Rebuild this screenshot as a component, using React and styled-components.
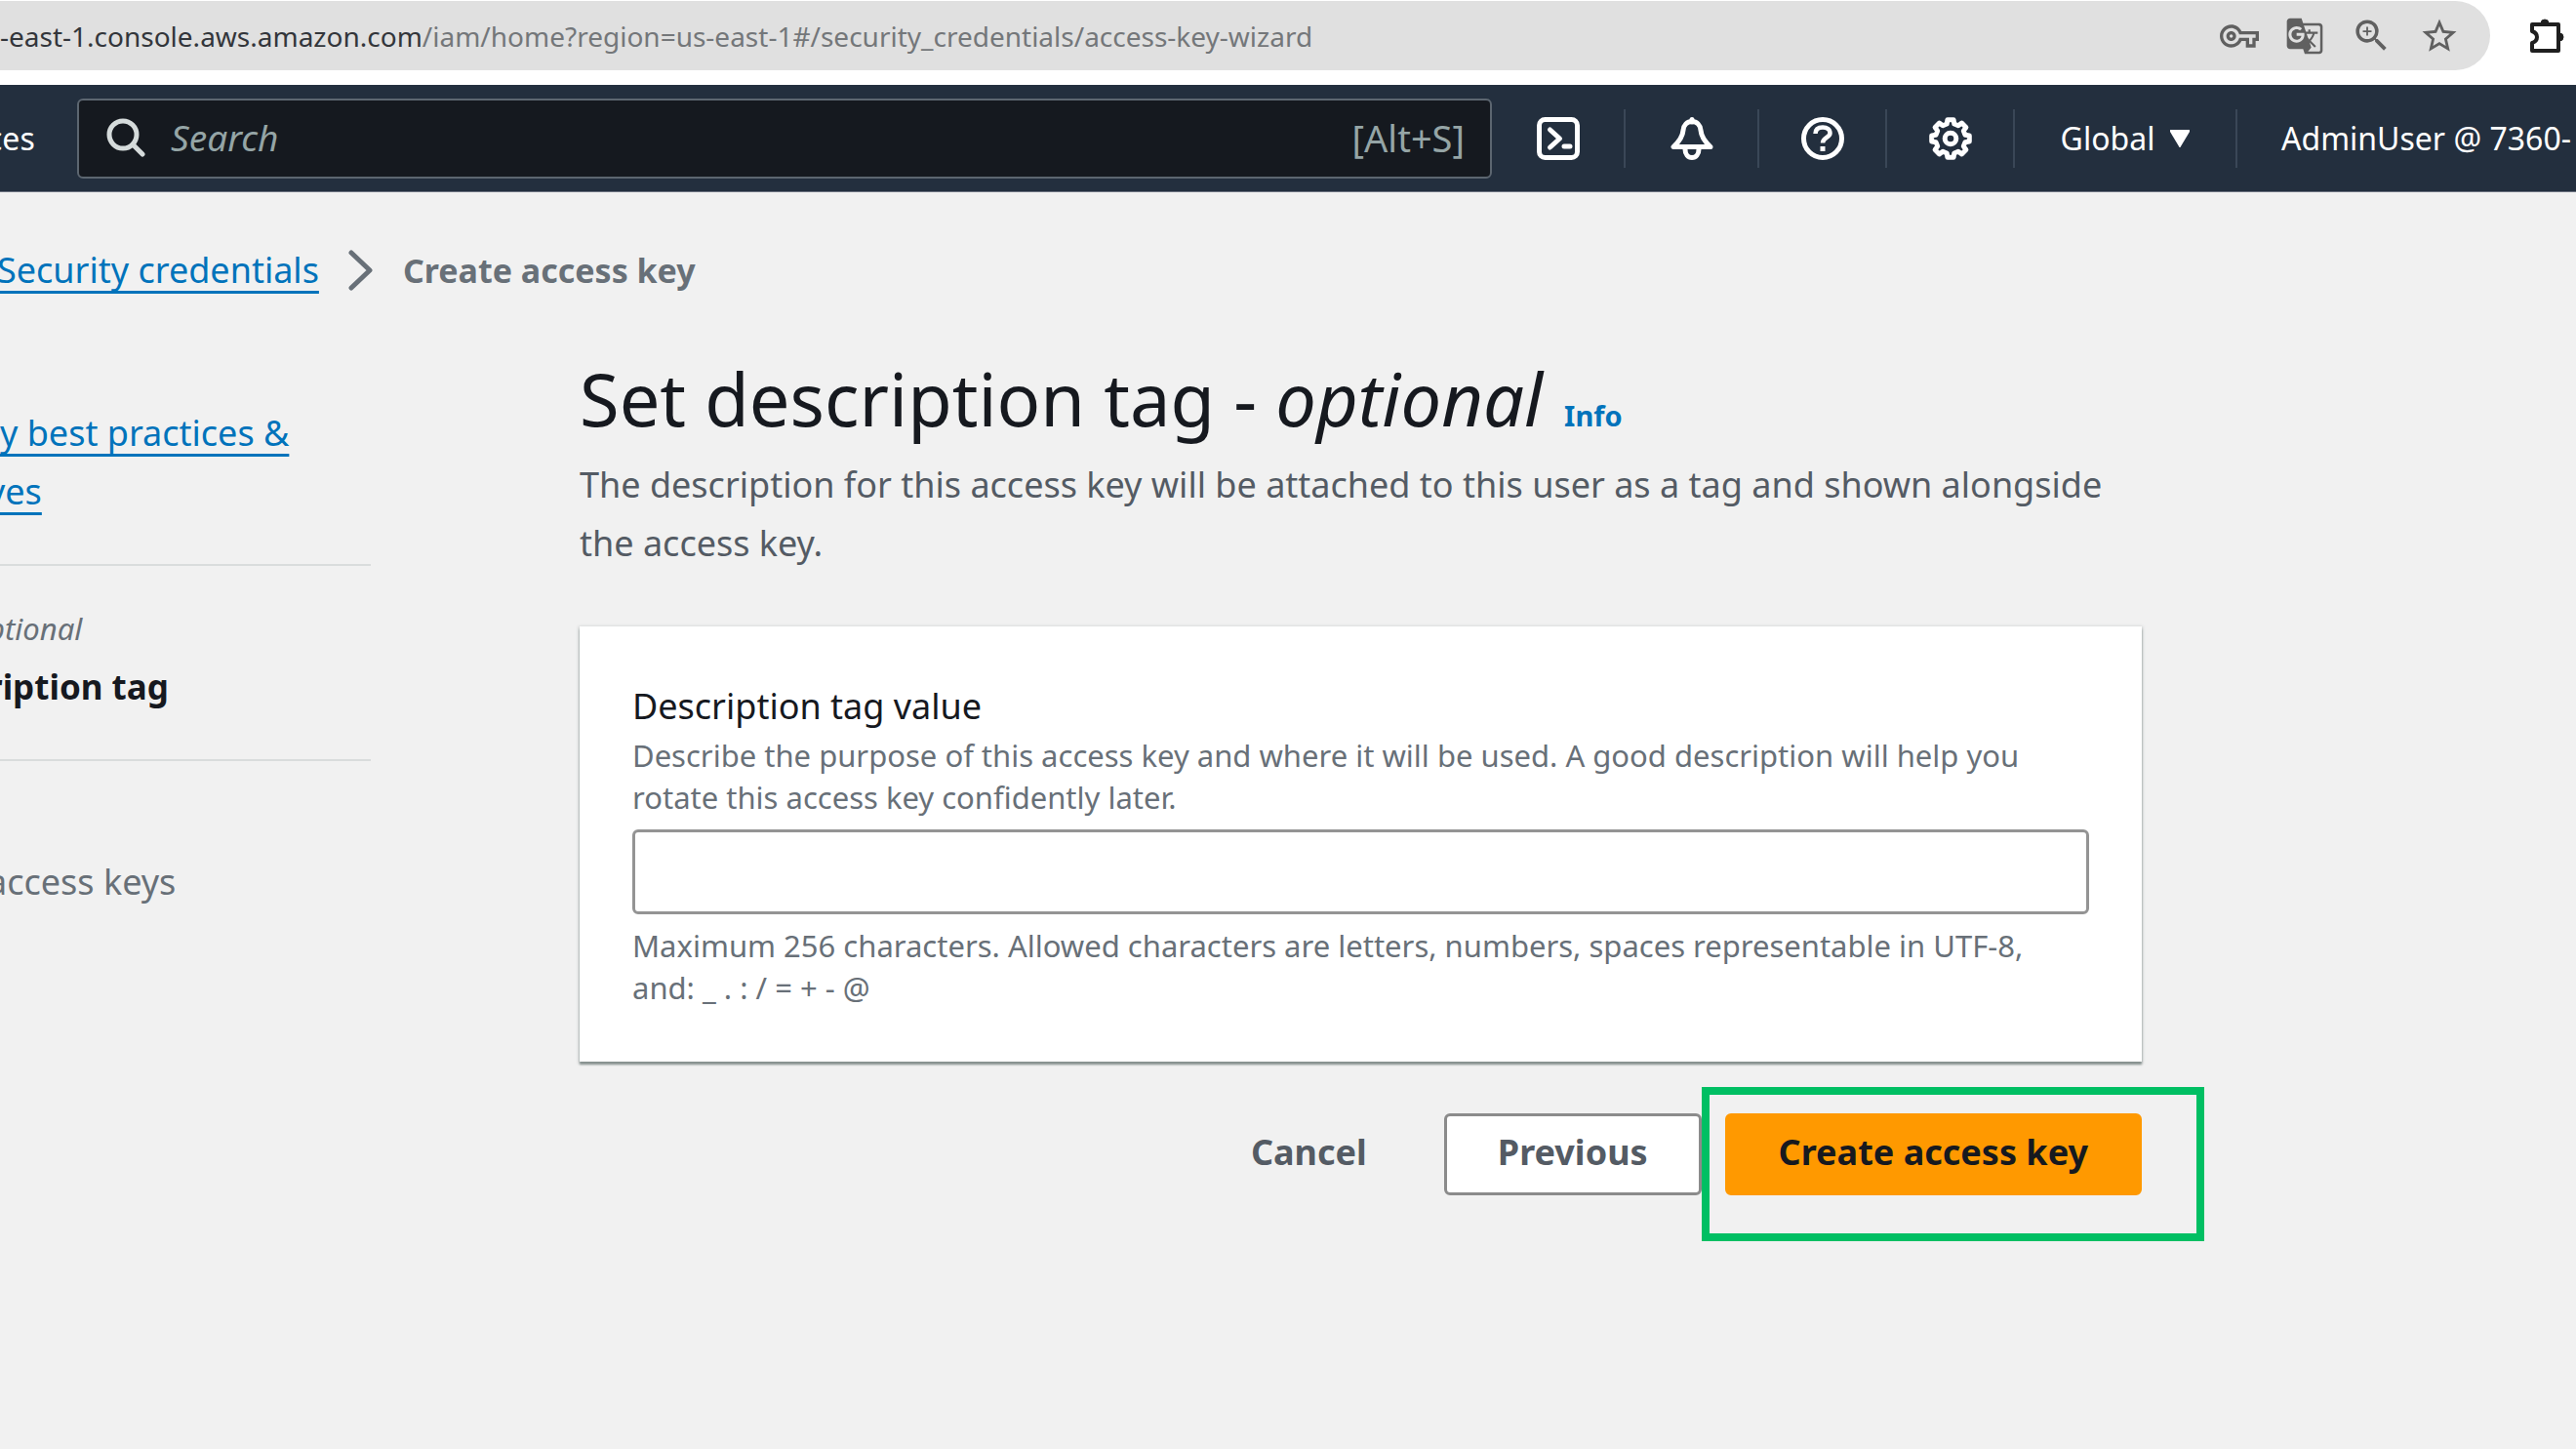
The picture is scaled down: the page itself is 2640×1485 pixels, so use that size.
import React from "react";
import styled, { createGlobalStyle } from "styled-components";
import {
  MdOutlineVpnKey,
  MdGTranslate,
  MdOutlineZoomIn,
  MdStarOutline,
} from "react-icons/md";

const GlobalStyle = createGlobalStyle`
  *, *::before, *::after { box-sizing: border-box; }
  body {
    margin: 0;
    background: #f1f1f1;
    color: #16191f;
    font-family: "Noto Sans", "Open Sans", sans-serif;
    font-size: 36px;
    line-height: 60px;
    overflow-x: hidden;
  }
  button, input { font: inherit; color: inherit; }
  button { cursor: pointer; }
`;

/* Browser bar */

const BrowserBar = styled.div`
  display: flex;
  align-items: flex-start;
  height: 87px;
  padding-top: 1px;
  background: #fff;
`;

const AddressBar = styled.div`
  flex: 1;
  display: flex;
  align-items: center;
  justify-content: space-between;
  height: 71px;
  padding-right: 31px;
  border-radius: 0 36px 36px 0;
  background: #e0e0e0;
`;

const Url = styled.span`
  font-size: 28px;
  line-height: 40px;
  white-space: nowrap;
  color: #74777a;
`;

const UrlHost = styled.span`
  color: #33363b;
`;

const AddressActions = styled.div`
  display: flex;
  align-items: center;
  gap: 27px;
`;

const PlainButton = styled.button`
  display: flex;
  align-items: center;
  justify-content: center;
  padding: 0;
  border: 0;
  background: none;
  color: ${(p) => p.$color || "#606060"};
`;

const Extensions = styled.div`
  display: flex;
  align-items: center;
  width: 88px;
  height: 71px;
  padding-left: 38px;
`;

/* Console navigation */

const NavBar = styled.nav`
  display: flex;
  align-items: center;
  height: 110px;
  background: #232f3e;
  border-bottom: 1px solid #6b7280;
  color: #fff;
`;

const NavText = styled.button`
  flex: none;
  padding: 0;
  border: 0;
  background: none;
  font-size: 32px;
  line-height: 60px;
  text-align: left;
  white-space: nowrap;
`;

const NavLead = styled.div`
  flex: none;
  width: 92px;
  margin-left: -13px;
`;

const NavAccount = styled.div`
  flex: none;
  width: 347px;
  padding-left: 45px;
`;

const SearchBox = styled.label`
  flex: 1;
  display: flex;
  align-items: center;
  gap: 26px;
  height: 82px;
  padding: 0 26px 2px 28px;
  border: 2px solid #5c6670;
  border-radius: 6px;
  background: #15191f;
  color: #95a5a6;
`;

const SearchInput = styled.input`
  flex: 1;
  min-width: 0;
  padding: 0;
  border: 0;
  outline: 0;
  background: none;
  font-size: 37px;
  &::placeholder {
    color: #95a5a6;
    opacity: 1;
    font-style: italic;
  }
`;

const Shortcut = styled.span`
  font-size: 38px;
`;

const NavCell = styled.div`
  flex: none;
  display: flex;
  align-items: center;
  justify-content: center;
  width: ${(p) => p.$width}px;
  height: 60px;
  border-right: 2px solid #3a4757;
`;

const RegionButton = styled.button`
  display: flex;
  align-items: center;
  gap: 16px;
  padding: 0;
  border: 0;
  background: none;
  font-size: 32px;
  line-height: 60px;
`;

/* Page */

const Page = styled.div`
  display: flex;
  flex-direction: column;
  gap: 54px;
  padding: 50px 0;
`;

const Breadcrumbs = styled.nav`
  display: flex;
  align-items: center;
  gap: 30px;
  margin-left: -3px;
`;

const Link = styled.a`
  color: #0073bb;
  text-decoration: underline;
  text-decoration-thickness: 3px;
  text-underline-offset: 8px;
  text-decoration-skip-ink: none;
`;

const CurrentCrumb = styled.span`
  font-size: 34px;
  font-weight: 700;
  color: #687078;
`;

const Columns = styled.div`
  display: grid;
  grid-template-columns: 380px minmax(0, 1601px);
  column-gap: 214px;
`;

const Steps = styled.ol`
  margin: 0 0 0 -13px;
  padding: 53px 0 0;
  list-style: none;
`;

const Step = styled.li`
  padding: ${(p) => p.$top}px 0 ${(p) => (p.$last ? 0 : 44)}px;
  border-bottom: ${(p) => (p.$last ? 0 : 2)}px solid #d9dcdc;
  color: #687078;
  white-space: nowrap;
`;

const StepNote = styled.em`
  display: block;
  font-size: 31px;
`;

const StepName = styled.strong`
  display: block;
  font-size: 35px;
  color: #16191f;
`;

const Main = styled.main`
  display: flex;
  flex-direction: column;
`;

const TitleRow = styled.div`
  display: flex;
  align-items: baseline;
  gap: 22px;
  margin-bottom: 10px;
`;

const Title = styled.h1`
  margin: 0;
  font-size: 74px;
  line-height: 96px;
  font-weight: 400;
`;

const InfoLink = styled.a`
  font-size: 29px;
  font-weight: 700;
  color: #0073bb;
  text-decoration: none;
`;

const Lead = styled.p`
  margin: 0 0 55px;
  color: #545b64;
`;

const Card = styled.section`
  display: flex;
  flex-direction: column;
  padding: 56px 54px 54px;
  background: #fff;
  box-shadow: 0 3px 2px #87918f, 0 1px 3px 1px #c9cdcd;
`;

const FieldLabel = styled.label`
  line-height: 52px;
  margin-bottom: 3px;
`;

const Hint = styled.p`
  margin: 0;
  font-size: 31px;
  line-height: 43px;
  color: #687078;
`;

const TextField = styled.input`
  width: 100%;
  height: 87px;
  margin: 11px 0;
  padding: 0 20px;
  border: 3px solid #949494;
  border-radius: 6px;
  background: #fff;
`;

const Actions = styled.div`
  display: flex;
  justify-content: flex-end;
  gap: 24px;
  margin-top: 53px;
`;

const variants = {
  link: "background: none; border-color: transparent; color: #545b64;",
  normal: "background: #fff; border-color: #8b8b8b; color: #545b64;",
  primary: "background: #ff9900; border-color: #ff9900; color: #16191f;",
};

const Button = styled.button`
  display: block;
  height: 84px;
  padding: 0 52px 4px;
  border: 3px solid;
  border-radius: 6px;
  font-weight: 700;
  white-space: nowrap;
  ${(p) => variants[p.$variant]}
`;

const Highlighted = styled.div`
  position: relative;
  &::after {
    content: "";
    position: absolute;
    inset: -27px -64px -47px -24px;
    border: 8px solid #00bf63;
    pointer-events: none;
  }
`;

/* Icons */

const NavIcon = ({ children, label }) => (
  <svg
    width="44"
    height="44"
    viewBox="0 0 44 44"
    fill="none"
    stroke="currentColor"
    strokeWidth="5"
    strokeLinecap="round"
    strokeLinejoin="round"
    role="img"
    aria-label={label}
  >
    {children}
  </svg>
);

const gearPath = (() => {
  const points = [];
  for (let i = 0; i < 8; i += 1) {
    const mid = (i * Math.PI) / 4 - Math.PI / 2;
    [[-0.25, 15.5], [-0.16, 19.6], [0.16, 19.6], [0.25, 15.5]].forEach(([da, r]) => {
      points.push(`${(22 + r * Math.cos(mid + da)).toFixed(1)} ${(22 + r * Math.sin(mid + da)).toFixed(1)}`);
    });
  }
  return `M${points.join("L")}Z`;
})();

const SearchIcon = () => (
  <svg width="40" height="40" viewBox="0 0 40 40" fill="none" stroke="#d5dbdb" strokeWidth="5" strokeLinecap="round" aria-hidden="true">
    <circle cx="17" cy="17" r="14" />
    <path d="M27 27l10 10" />
  </svg>
);

const PuzzleIcon = () => (
  <svg width="40" height="40" viewBox="0 0 40 40" fill="none" stroke="#1f1f1f" strokeWidth="4" strokeLinejoin="round" role="img" aria-label="Extensions">
    <path d="M5 8h27v27H5v-8c3-1 5-3 5-6s-2-5-5-6z" />
    <path d="M14 7a4 4 0 0 1 8 0zM33 17a4 4 0 0 1 0 8z" fill="#1f1f1f" strokeWidth="1" />
  </svg>
);

export default function App() {
  return (
    <>
      <GlobalStyle />
      <BrowserBar>
        <AddressBar>
          <Url>
            <UrlHost>-east-1.console.aws.amazon.com</UrlHost>
            /iam/home?region=us-east-1#/security_credentials/access-key-wizard
          </Url>
          <AddressActions>
            <PlainButton aria-label="Passwords"><MdOutlineVpnKey size={40} /></PlainButton>
            <PlainButton aria-label="Translate"><MdGTranslate size={40} /></PlainButton>
            <PlainButton aria-label="Zoom"><MdOutlineZoomIn size={43} /></PlainButton>
            <PlainButton aria-label="Bookmark"><MdStarOutline size={42} /></PlainButton>
          </AddressActions>
        </AddressBar>
        <Extensions>
          <PlainButton><PuzzleIcon /></PlainButton>
        </Extensions>
      </BrowserBar>

      <NavBar>
        <NavLead>
          <NavText>ces</NavText>
        </NavLead>
        <SearchBox>
          <SearchIcon />
          <SearchInput type="search" placeholder="Search" aria-label="Search" />
          <Shortcut>[Alt+S]</Shortcut>
        </SearchBox>
        <NavCell $width={137}>
          <PlainButton $color="#fff">
            <NavIcon label="CloudShell">
              <rect x="2.5" y="2.5" width="39" height="39" rx="6" />
              <path d="M13.5 13l10 9-10 9M28 30h6" />
            </NavIcon>
          </PlainButton>
        </NavCell>
        <NavCell $width={137}>
          <PlainButton $color="#fff">
            <NavIcon label="Notifications">
              <path d="M22 2.5V5" />
              <path d="M22 4.5c-5 0-8.5 3.5-9 9C12.5 20.5 9 25 3 30.5h38c-6-5.5-9.5-10-10-17-.5-5.5-4-9-9-9z" />
              <path d="M15 33c0 5 3 8.5 7 8.5s7-3.5 7-8.5" />
            </NavIcon>
          </PlainButton>
        </NavCell>
        <NavCell $width={131}>
          <PlainButton $color="#fff">
            <NavIcon label="Help">
              <circle cx="22" cy="22" r="19.5" />
              <path d="M14.5 17c0-4.5 3-6.5 7.5-6.5s7.5 2 7.5 6c0 4.5-7.5 4.5-7.5 10" strokeWidth="4.5" strokeLinecap="butt" />
              <path d="M19.5 30h5v5h-5z" fill="currentColor" stroke="none" />
            </NavIcon>
          </PlainButton>
        </NavCell>
        <NavCell $width={131}>
          <PlainButton $color="#fff">
            <NavIcon label="Settings">
              <path d={gearPath} />
              <circle cx="22" cy="22" r="5.8" />
            </NavIcon>
          </PlainButton>
        </NavCell>
        <NavCell $width={228}>
          <RegionButton>
            Global
            <svg width="20" height="18" viewBox="0 0 20 18" fill="currentColor" aria-hidden="true">
              <path d="M1 0h18a1 1 0 0 1 1 2l-9 15a1 1 0 0 1-2 0L0 2a1 1 0 0 1 1-2z" />
            </svg>
          </RegionButton>
        </NavCell>
        <NavAccount>
          <NavText>AdminUser @ 7360-</NavText>
        </NavAccount>
      </NavBar>

      <Page>
        <Breadcrumbs aria-label="Breadcrumbs">
          <Link href="#credentials">Security credentials</Link>
          <svg width="26" height="42" viewBox="0 0 26 42" fill="none" stroke="#687078" strokeWidth="5" strokeLinecap="round" strokeLinejoin="round" aria-hidden="true">
            <path d="M3 3l19 18L3 39" />
          </svg>
          <CurrentCrumb>Create access key</CurrentCrumb>
        </Breadcrumbs>

        <Columns>
          <Steps>
            <Step $top={0}>
              <Link href="#step-1">ty best practices &amp;<br />ves</Link>
            </Step>
            <Step $top={34}>
              <StepNote>ptional</StepNote>
              <StepName>ription tag</StepName>
            </Step>
            <Step $top={94} $last>access keys</Step>
          </Steps>

          <Main>
            <TitleRow>
              <Title>Set description tag - <em>optional</em></Title>
              <InfoLink href="#info">Info</InfoLink>
            </TitleRow>
            <Lead>
              The description for this access key will be attached to this user as a tag and shown alongside the access key.
            </Lead>
            <Card>
              <FieldLabel htmlFor="tag-value">Description tag value</FieldLabel>
              <Hint>
                Describe the purpose of this access key and where it will be used. A good description will help you rotate this access key confidently later.
              </Hint>
              <TextField id="tag-value" type="text" maxLength={256} />
              <Hint>
                Maximum 256 characters. Allowed characters are letters, numbers, spaces representable in UTF-8, and: _ . : / = + - @
              </Hint>
            </Card>
            <Actions>
              <Button $variant="link">Cancel</Button>
              <Button $variant="normal">Previous</Button>
              <Highlighted>
                <Button $variant="primary">Create access key</Button>
              </Highlighted>
            </Actions>
          </Main>
        </Columns>
      </Page>
    </>
  );
}
